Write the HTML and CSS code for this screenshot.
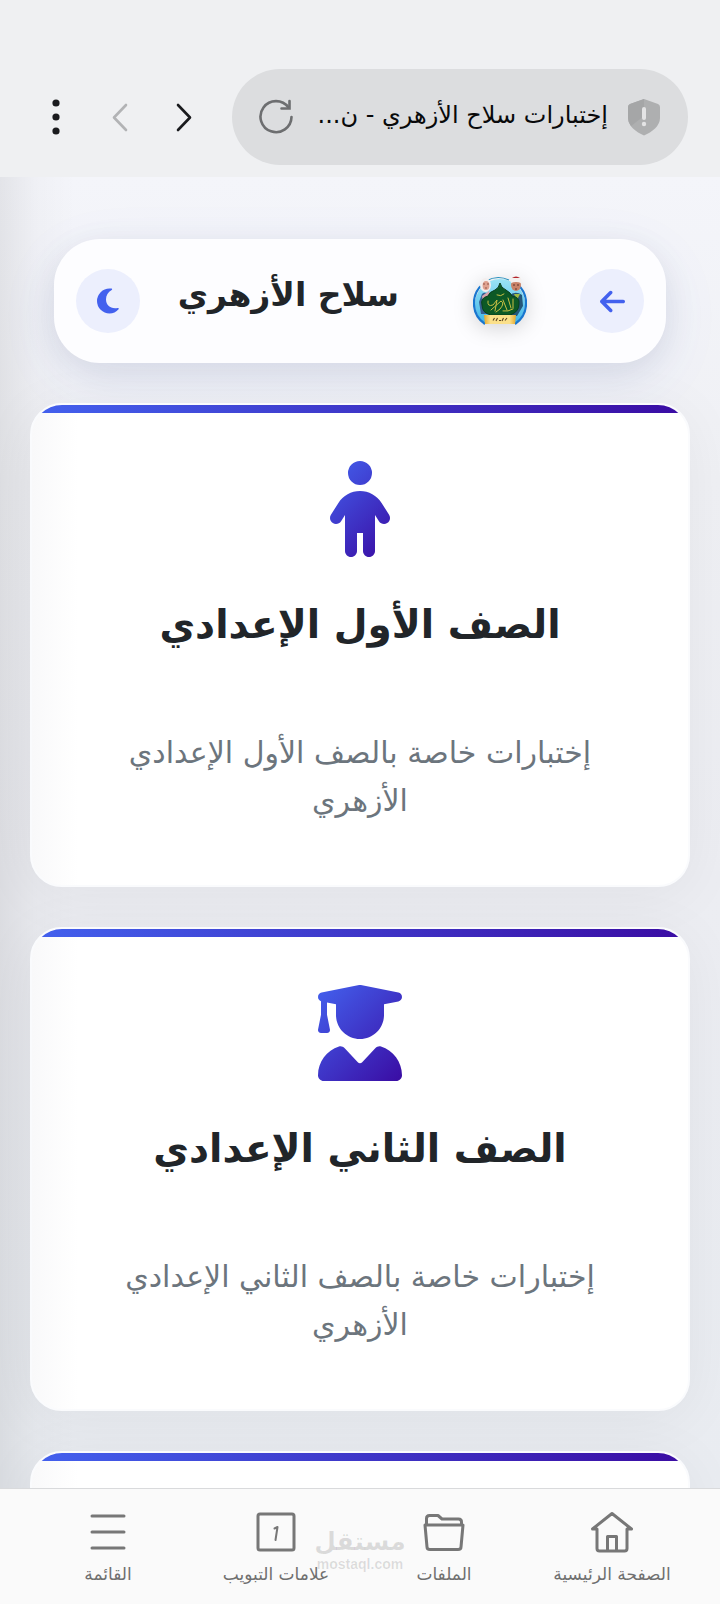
FILE: index.html
```html
<!DOCTYPE html>
<html lang="ar" dir="rtl">
<head>
<meta charset="utf-8">
<meta name="viewport" content="width=device-width, initial-scale=1">
<title>إختبارات سلاح الأزهري</title>
<link rel="stylesheet" href="styles.css">
</head>
<body>
<div class="shell">
  <header class="browser-bar">
    <div class="address">
      <svg class="shield" viewBox="0 0 32 38" aria-hidden="true"><path d="M16 1 30 6Q32 7 32 9V20C32 28 24 34 16 37.500 8 34 0 28 0 20V9Q0 7 2 6Z" fill="#aeafb0"/><path d="M16 1V18L3 28Q0 24 0 20V9Q0 7 2 6Z" fill="#a5a6a7"/><path d="M16 11V20" stroke="#e4e4e5" stroke-width="4" stroke-linecap="round"/><circle cx="16" cy="26" r="2.200" fill="#e4e4e5"/></svg>
      <span class="address-text">إختبارات سلاح الأزهري - ن...</span>
      <button class="plain reload" type="button" aria-label="إعادة التحميل"><svg viewBox="0 0 36 36" width="36" height="36" fill="none" stroke="#6d6e70" stroke-width="2.600" stroke-linecap="round"><path d="M33.500 18A15.500 15.500 0 1 1 30.500 8.500"/><path d="M31.500 2V9.500H23.500"/></svg></button>
    </div>
    <button class="plain bar-btn" type="button" aria-label="التالي"><svg viewBox="0 0 32 32" width="32" height="32" fill="none" stroke="#1a1b1e" stroke-width="2.600" stroke-linecap="round" stroke-linejoin="round"><path d="M10 4 22 16.500 10 29"/></svg></button>
    <button class="plain bar-btn" type="button" aria-label="السابق" disabled><svg viewBox="0 0 32 32" width="32" height="32" fill="none" stroke="#b2b3b5" stroke-width="2.600" stroke-linecap="round" stroke-linejoin="round"><path d="M22 4 10 16.500 22 29"/></svg></button>
    <button class="plain bar-btn" type="button" aria-label="المزيد"><svg viewBox="0 0 36 36" width="36" height="36" fill="#1a1b1e"><circle cx="18" cy="4" r="3.600"/><circle cx="18" cy="18" r="3.600"/><circle cx="18" cy="32" r="3.600"/></svg></button>
  </header>

  <main class="page">
    <div class="site-header">
      <button class="plain round" type="button" aria-label="رجوع"><svg viewBox="0 0 448 512" width="25" height="29" fill="#4361ee"><path d="M9.400 233.400c-12.500 12.500-12.500 32.800 0 45.300l160 160c12.500 12.500 32.800 12.500 45.300 0s12.500-32.800 0-45.300L109.200 288 416 288c17.700 0 32-14.300 32-32s-14.300-32-32-32l-306.700 0L214.600 118.600c12.500-12.500 12.500-32.800 0-45.300s-32.800-12.500-45.300 0l-160 160z"/></svg></button>
      <svg class="logo" viewBox="0 0 54 50" role="img" aria-label="شعار سلاح الأزهري">
        <defs><linearGradient id="sky" x1="0" y1="0" x2="0" y2="1"><stop offset="0" stop-color="#9be4f5"/><stop offset="1" stop-color="#3fb5e8"/></linearGradient><linearGradient id="gold" x1="0" x2="1"><stop offset="0" stop-color="#e5a82c"/><stop offset=".2" stop-color="#fbe08a"/><stop offset=".8" stop-color="#fbe08a"/><stop offset="1" stop-color="#e5a82c"/></linearGradient></defs>
        <path d="M12 48A25 25 0 1 1 42 48Z" fill="url(#sky)"/>
        <path d="M12 48A25 25 0 0 1 10 8M44 8A25 25 0 0 1 42 48" fill="none" stroke="#1976cf" stroke-width="2.200"/>
        <path d="M13 5A25 25 0 0 1 36 4" fill="none" stroke="#278fbd" stroke-width="1.200"/>
        <path d="M6 26 9 18Q12 15 17 19V38H8Z" fill="#365f92"/>
        <path d="M36 20Q42 14 49 19L50 30 44 40H37Z" fill="#245779"/>
        <path d="M9 20 16 15 18 22 10 25Z" fill="#d7a5ae"/>
        <path d="M41 18 44 24 47 18Z" fill="#9fbb45"/>
        <ellipse cx="12.500" cy="9" rx="5.500" ry="7" fill="#f3eeee"/><ellipse cx="13" cy="9.500" rx="3.400" ry="4.500" fill="#dfa18f"/>
        <path d="M10 8H12M14 8H16M12 12H14" stroke="#7d4238" stroke-width=".8"/>
        <ellipse cx="43" cy="9" rx="5" ry="6" fill="#c98268"/><path d="M38 7Q36 0 43 0 50 0 48 7Q43 5 38 7Z" fill="#f4f0ee"/><path d="M39 2Q43-1 47 2Z" fill="#b3242c"/>
        <path d="M40 9H42M44 9H46M42 13H44" stroke="#552a25" stroke-width=".9"/>
        <path d="M27 7Q28 12 33 14 38 17 39 20 47 21 46 28 46 36 37 39H18Q9 37 9 29 7 22 15 20 16 16 22 14 26 12 27 7Z" fill="#0c5926" stroke="#093f1d"/>
        <path d="M24 19Q28 21 31 18M15 25Q14 31 20 29L24 24 22 35M18 34 28 25Q32 27 27 33L23 36M30 24 34 34M35 22 38 32M40 23V32M30 35Q35 36 40 33" fill="none" stroke="#c9c043" stroke-width="1" stroke-linecap="round"/>
        <path d="M11 39H43L42 48H12Z" fill="url(#gold)"/>
        <path d="M20 44.500 21.500 42M23 45 24.500 42M26 44.500H28M29 45 30.500 42M32 44.500 34 42" fill="none" stroke="#5b4522" stroke-width="1.100"/>
      </svg>
      <h1 class="site-title">سلاح الأزهري</h1>
      <button class="plain round" type="button" aria-label="الوضع الليلي"><svg viewBox="0 0 22 26" width="22" height="26" fill="#4361ee"><path d="M14.500 .6C15.400 .8 15.300 1.400 14.700 1.900C11 4 9 7.500 9 11.300C9 17.500 14 21.400 20.700 20C21.700 19.800 22.100 20.500 21.600 21.200C19.300 24 16 25.500 12.500 25.500A12.500 12.500 0 0 1 12.500 .5Q13.500 .5 14.500 .6Z"/></svg></button>
    </div>

    <section class="cards">
      <article class="card">
        <svg class="card-icon" viewBox="0 0 320 512" aria-hidden="true"><defs><linearGradient id="g1" gradientUnits="userSpaceOnUse" x1="-48" y1="48" x2="368" y2="464"><stop offset="0" stop-color="#4361ee"/><stop offset="1" stop-color="#3a0ca3"/></linearGradient></defs><path fill="url(#g1)" d="M96 64a64 64 0 1 1 128 0A64 64 0 1 1 96 64zm48 320v96c0 17.700-14.300 32-32 32s-32-14.300-32-32V287.800L59.100 321c-9.400 15-29.200 19.400-44.100 10S-4.500 301.900 4.900 287l39.900-63.300C69.700 184 113.200 160 160 160s90.300 24 115.200 63.600L315.100 287c9.400 15 4.900 34.700-10 44.100s-34.700 4.900-44.100-10L240 287.800V480c0 17.700-14.300 32-32 32s-32-14.300-32-32V384H144z"/></svg>
        <h2 class="card-title">الصف الأول الإعدادي</h2>
        <p class="card-text">إختبارات خاصة بالصف الأول الإعدادي الأزهري</p>
      </article>
      <article class="card">
        <svg class="card-icon" viewBox="0 0 448 512" aria-hidden="true"><defs><linearGradient id="g2" gradientUnits="userSpaceOnUse" x1="-16" y1="16" x2="464" y2="496"><stop offset="0" stop-color="#4361ee"/><stop offset="1" stop-color="#3a0ca3"/></linearGradient></defs><path fill="url(#g2)" d="M219.300 .5c3.100-.6 6.300-.6 9.400 0l200 40C439.900 42.700 448 52.600 448 64s-8.100 21.300-19.300 23.500L352 102.900V160c0 70.700-57.300 128-128 128s-128-57.300-128-128V102.900L48 93.300v65.100l15.700 78.400c.9 4.700-.3 9.600-3.300 13.300s-7.600 5.900-12.400 5.900H16c-4.800 0-9.300-2.100-12.400-5.900s-4.300-8.600-3.300-13.300L16 158.400V86.600C6.500 83.300 0 74.300 0 64C0 52.600 8.100 42.700 19.300 40.500l200-40zM111.900 327.700c10.500-3.400 21.800 .4 29.400 8.500l71 75.500c6.300 6.700 17 6.700 23.300 0l71-75.500c7.600-8.100 18.900-11.900 29.400-8.500C401 348.600 448 409.400 448 481.300c0 17-13.800 30.700-30.700 30.700H30.700C13.800 512 0 498.200 0 481.300c0-71.900 47-132.700 111.900-153.600z"/></svg>
        <h2 class="card-title">الصف الثاني الإعدادي</h2>
        <p class="card-text">إختبارات خاصة بالصف الثاني الإعدادي الأزهري</p>
      </article>
      <article class="card"></article>
    </section>
  </main>

  <nav class="bottom-nav">
    <button class="plain nav-item" type="button"><svg viewBox="0 0 44 44" width="44" height="44"><path d="M2.500 19 22 3.500 41.500 19H37V38.500Q37 41 34.500 41H9.500Q7 41 7 38.500V19ZM17.500 41V26.500H26.500V41"/></svg><span>الصفحة الرئيسية</span></button>
    <button class="plain nav-item" type="button"><svg viewBox="0 0 44 44" width="44" height="44"><path d="M4.500 15V8.500Q4.500 5.500 7.500 5.500H16L20 9H36.500Q39.500 9 39.500 12V15M3 15H41L39 37Q39 39.500 36 39.500H8Q5 39.500 5 37Z"/></svg><span>الملفات</span></button>
    <button class="plain nav-item" type="button"><svg viewBox="0 0 44 44" width="44" height="44"><rect x="4" y="4" width="36" height="36" rx="2"/><path stroke-width="2" d="M20.500 18.500 23.500 17 21.500 30"/></svg><span>علامات التبويب</span></button>
    <button class="plain nav-item" type="button"><svg viewBox="0 0 44 44" width="44" height="44"><path d="M6 6H38M6 22H38M6 38H38"/></svg><span>القائمة</span></button>
    <div class="watermark" dir="ltr"><b>مستقل</b><span>mostaql.com</span></div>
  </nav>
</div>
</body>
</html>
```
FILE: styles.css
```css
* { box-sizing: border-box; }

body {
  margin: 0;
  font-family: "DejaVu Sans", sans-serif;
  color: #212529;
}

h1, h2, p { margin: 0; }

.plain {
  padding: 0;
  border: 0;
  background: none;
  font: inherit;
  color: inherit;
}

.shell {
  display: flex;
  flex-direction: column;
  height: 100vh;
  overflow: hidden;
}

.browser-bar {
  display: flex;
  align-items: center;
  padding: 69px 32px 12px 24px;
  background: #eff0f2;
}

.address {
  flex: 1;
  display: flex;
  align-items: center;
  min-width: 0;
  height: 96px;
  margin-left: 16px;
  padding: 0 28px 0 26px;
  border-radius: 48px;
  background: #dcdddf;
}

.shield { width: 32px; height: 38px; }

.address-text {
  flex: 1;
  min-width: 0;
  padding: 0 20px 4px 0;
  overflow: hidden;
  white-space: nowrap;
  font-size: 24px;
  line-height: 40px;
  color: #08090a;
}

.reload, .bar-btn {
  display: flex;
  align-items: center;
  justify-content: center;
}

.bar-btn { width: 64px; height: 64px; }

.page {
  flex: 1;
  min-height: 0;
  overflow: hidden;
  padding: 62px 30px 0;
  background:
    linear-gradient(90deg, rgba(0, 0, 0, 0.07), rgba(0, 0, 0, 0.02) 36px, transparent 76px),
    linear-gradient(180deg, #f4f5fa, #eff0f4 300px, #ecedf2 700px, #e9ecf1);
}

.site-header {
  display: flex;
  align-items: center;
  margin: 0 24px 40px;
  padding: 30px 22px;
  border-radius: 46px;
  background: #fdfdff;
  box-shadow: 0 16px 60px rgba(67, 97, 238, 0.08), 0 8px 32px rgba(0, 0, 0, 0.08);
}

.round {
  display: flex;
  align-items: center;
  justify-content: center;
  width: 64px;
  height: 64px;
  border-radius: 50%;
  background: #eceffd;
}

.logo {
  width: 54px;
  height: 50px;
  margin-right: 53px;
  filter: drop-shadow(0 4px 10px rgba(0, 0, 0, 0.16));
}

.site-title {
  flex: 1;
  padding: 0 74px 12px 0;
  font-size: 33px;
  line-height: 52px;
  white-space: nowrap;
}

.cards {
  display: flex;
  flex-direction: column;
  gap: 40px;
}

.card {
  position: relative;
  display: flex;
  flex-direction: column;
  align-items: center;
  min-height: 484px;
  padding: 56px 62px;
  border: 2px solid #fafbfd;
  border-radius: 32px;
  overflow: hidden;
  text-align: center;
  background: linear-gradient(90deg, #f9f9fa, #ffffff 46px);
  box-shadow: 0 8px 60px rgba(0, 0, 0, 0.05);
}

.card::before {
  content: "";
  position: absolute;
  inset: 0 0 auto;
  height: 8px;
  background: linear-gradient(90deg, #4361ee, #3a0ca3);
}

.card-icon { height: 96px; }

.card-title {
  margin-top: 32px;
  font-size: 39px;
  line-height: 72px;
}

.card-text {
  margin-top: 68px;
  font-size: 30px;
  line-height: 48px;
  color: #6c757d;
}

.bottom-nav {
  position: relative;
  z-index: 1;
  display: flex;
  height: 116px;
  padding: 0 24px;
  border-top: 1px solid #d9dadc;
  background: #fafafa;
}

.nav-item {
  flex: 1;
  display: flex;
  flex-direction: column;
  align-items: center;
  padding-top: 21px;
  font-size: 17px;
  line-height: 40px;
  white-space: nowrap;
  color: #6f6f6f;
}

.nav-item svg {
  fill: none;
  stroke: #777777;
  stroke-width: 3;
  stroke-linecap: round;
  stroke-linejoin: round;
}

.watermark {
  position: absolute;
  top: 39px;
  left: 50%;
  display: flex;
  flex-direction: column;
  align-items: center;
  transform: translateX(-50%);
  color: rgba(0, 0, 0, 0.12);
  pointer-events: none;
}

.watermark b { font-size: 25px; line-height: 28px; }

.watermark span {
  font: bold 14px/16px "Liberation Sans", sans-serif;
}
```
